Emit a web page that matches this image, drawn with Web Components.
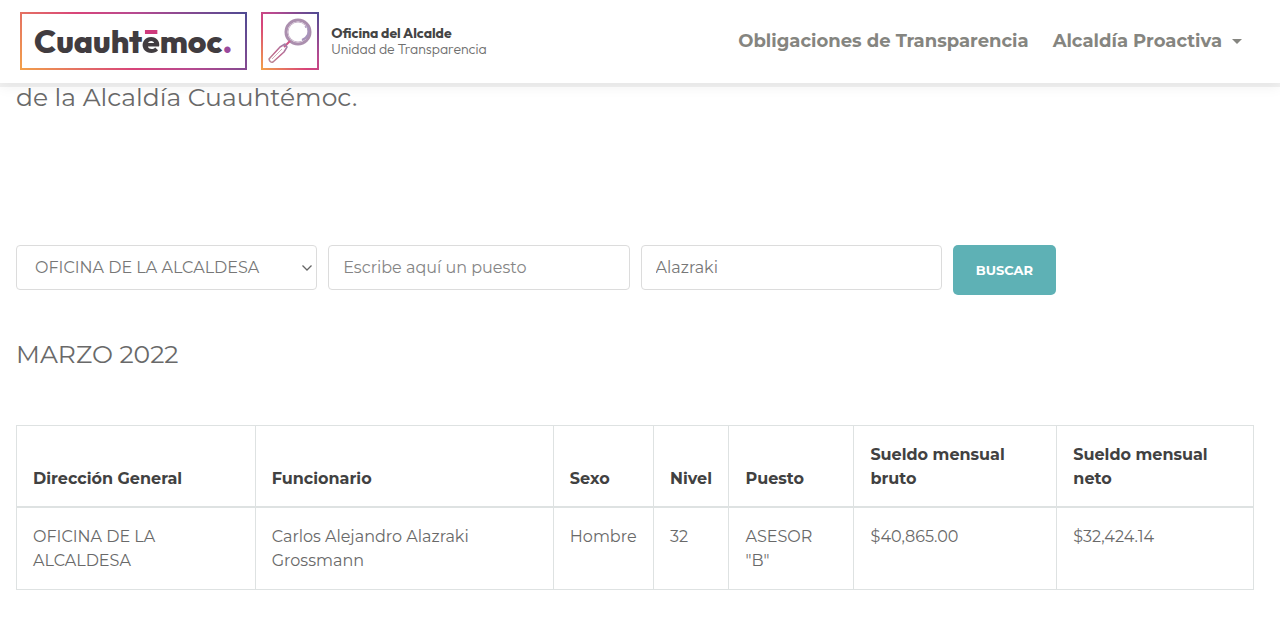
<!DOCTYPE html>
<html lang="es">
<head>
<meta charset="utf-8">
<meta name="viewport" content="width=device-width, initial-scale=1">
<title>Unidad de Transparencia</title>
<style>
  :root {
    --display: Montserrat, Inter, "Open Sans", sans-serif;
    --logo: Outfit, Urbanist, Inter, sans-serif;
    --ink: #414141;
    --ink-2: #696969;
    --ink-3: #858580;
    --rule: #dee2e2;
    --teal: #5eb1b5;
  }
  body {
    margin: 0;
    background: #fff;
    color: var(--ink-2);
    font-family: var(--display);
    font-size: 16px;
    line-height: 24px;
  }
  main { padding: 0 26px 24px 16px; }
</style>
</head>
<body>

<site-header>
  <brand-logo slot="brand"></brand-logo>
  <nav-link href="#obligaciones">Obligaciones de Transparencia</nav-link>
  <nav-link href="#proactiva" dropdown>Alcaldía Proactiva</nav-link>
</site-header>

<main>
  <page-title>de la Alcaldía Cuauhtémoc.</page-title>
  <salary-search puesto="" nombre="Alazraki"></salary-search>
  <page-title>MARZO 2022</page-title>
  <salary-table></salary-table>
</main>

<script>
// Attach an open shadow root with the given styles and markup.
function mount(el, styles, markup) {
  const root = el.attachShadow({ mode: 'open' });
  root.innerHTML = `<style>*, *::before { box-sizing: border-box; }${styles}</style>${markup}`;
  return root;
}

// ── <site-header> ─────────────────────────────────────────────────────
class SiteHeader extends HTMLElement {
  constructor() {
    super();
    mount(this, `
      :host { display: block; position: sticky; top: 0; z-index: 10; }
      header {
        display: flex; align-items: center; justify-content: space-between;
        gap: 24px;
        padding: 12px 38px 13px 20px;
        background: #fff;
        box-shadow: 0 4px 0 rgba(0, 0, 0, .05), 0 5px 12px rgba(0, 0, 0, .05);
      }
      nav { display: flex; align-items: center; gap: 24px; }
    `, `
      <header>
        <slot name="brand"></slot>
        <nav aria-label="Principal"><slot></slot></nav>
      </header>
    `);
  }
}

// ── <brand-logo> ──────────────────────────────────────────────────────
class BrandLogo extends HTMLElement {
  constructor() {
    super();
    mount(this, `
      :host { display: flex; align-items: center; gap: 14px; flex: none; font-family: var(--logo); }
      .word, .lens {
        height: 58px;
        border: 2px solid;
        border-image: linear-gradient(45deg, #f2a04a, #d8447a 40%, #b84a90 60%, #4f4a92) 1;
      }
      .word {
        display: flex; align-items: center;
        padding: 0 13px 0 12px;
        color: #413c40;
        font-size: 32px; font-weight: 800; line-height: 40px;
      }
      .e {
        background: linear-gradient(#cf3a7c 13px, #413c40 13px);
        -webkit-background-clip: text;
        background-clip: text;
        color: transparent;
      }
      .dot { color: #9a4a9c; }
      .lens { width: 58px; }
      .lens svg { display: block; width: 54px; height: 54px; }
      .office { color: #6f6f6f; font-size: 14px; font-weight: 300; line-height: 16px; margin-left: -2px; }
      .office b { display: block; color: #444; font-weight: 700; }
    `, `
      <div class="word"><span>Cuauht<span class="e">ē</span>moc<span class="dot">.</span></span></div>
      <div class="lens">
        <svg viewBox="0 0 54 54" fill="none" aria-hidden="true">
          <defs>
            <linearGradient id="g" x1="0" y1="1" x2="1" y2="0">
              <stop offset="0" stop-color="#b98a93"/>
              <stop offset=".5" stop-color="#c0638c"/>
              <stop offset="1" stop-color="#9a86ad"/>
            </linearGradient>
          </defs>
          <circle cx="35" cy="18" r="12" stroke="#ab8fae" stroke-width="3"/>
          <circle cx="35" cy="18" r="10" stroke="#c8b3ca" stroke-width="1"/>
          <path d="M45 13q3 9-6 13" stroke="#a793bb" stroke-width="2"/>
          <path d="M42 12l1 2m1-3v2" stroke="#a793bb"/>
          <path d="M27 27l-6 6" stroke="#cf5586" stroke-width="2"/>
          <path d="M22 30l2 3-3 5L10 48q-3 1-4-3L17 33z" stroke="url(#g)" stroke-width="1.5" stroke-linejoin="round"/>
          <path d="M19 35L9 45" stroke="#d3b0ba"/>
        </svg>
      </div>
      <div class="office"><b>Oficina del Alcalde</b>Unidad de Transparencia</div>
    `);
  }
}

// ── <nav-link href dropdown> ──────────────────────────────────────────
class NavLink extends HTMLElement {
  constructor() {
    super();
    this._root = mount(this, `
      :host { display: block; }
      a {
        display: flex; align-items: center; gap: 10px;
        color: var(--ink-3);
        font-size: 18px; font-weight: 700; line-height: 24px;
        text-decoration: none;
        white-space: nowrap;
      }
      :host([dropdown]) a::after {
        content: "";
        border: 5px solid transparent;
        border-top-color: currentColor;
        border-bottom: 0;
      }
    `, '<a><slot></slot></a>');
  }
  connectedCallback() {
    const a = this._root.querySelector('a');
    a.href = this.getAttribute('href') || '#';
    if (this.hasAttribute('dropdown')) a.setAttribute('aria-haspopup', 'true');
  }
}

// ── <page-title> ──────────────────────────────────────────────────────
class PageTitle extends HTMLElement {
  constructor() {
    super();
    mount(this, `
      :host { display: block; }
      h2 { margin: 0; font-size: 25px; font-weight: 400; line-height: 28px; }
    `, '<h2><slot></slot></h2>');
  }
}

// ── <salary-search puesto nombre> ─────────────────────────────────────
class SalarySearch extends HTMLElement {
  constructor() {
    super();
    this._root = mount(this, `
      :host { display: block; margin: 134px 0 45px; }
      form {
        display: grid;
        grid-template-columns: repeat(4, 1fr);
        align-items: start;
        gap: 11px;
      }
      .field { display: grid; align-items: center; }
      .field > * { grid-area: 1 / 1; }
      input, select {
        width: 100%; height: 45px;
        margin: 0; padding: 0 14px;
        border: 1px solid #dcdcdc;
        border-radius: 4px;
        background: #fff;
        color: #777;
        font: inherit;
      }
      select { appearance: none; padding: 0 28px 0 18px; }
      input::placeholder { color: #858585; opacity: 1; }
      svg { justify-self: end; width: 12px; height: 8px; margin-right: 4px; pointer-events: none; }
      button {
        justify-self: start;
        height: 50px; padding: 0 23px;
        border: 0; border-radius: 5px;
        background: var(--teal);
        color: #fff;
        font: inherit; font-size: 13px; font-weight: 700;
        cursor: pointer;
      }
    `, `
      <form>
        <div class="field">
          <select aria-label="Dirección general"><option>OFICINA DE LA ALCALDESA</option></select>
          <svg viewBox="0 0 12 8" fill="none" stroke="#666" stroke-width="1.3" aria-hidden="true"><path d="M1.500 1.500L6 6l4.500-4.500"/></svg>
        </div>
        <input name="puesto" type="text" aria-label="Puesto" placeholder="Escribe aquí un puesto">
        <input name="nombre" type="text" aria-label="Nombre">
        <button type="submit">BUSCAR</button>
      </form>
    `);
    this._root.querySelector('form').addEventListener('submit', (ev) => ev.preventDefault());
  }
  connectedCallback() {
    for (const name of ['puesto', 'nombre']) {
      this._root.querySelector(`[name=${name}]`).value = this.getAttribute(name) || '';
    }
  }
}

// ── <salary-table> ────────────────────────────────────────────────────
const COLUMNS = [
  { key: 'direccion',   label: 'Dirección General',    width: '19.3%' },
  { key: 'funcionario', label: 'Funcionario',          width: '24.1%' },
  { key: 'sexo',        label: 'Sexo',                 width: '8.1%' },
  { key: 'nivel',       label: 'Nivel',                width: '6.1%' },
  { key: 'puesto',      label: 'Puesto',               width: '10.1%' },
  { key: 'bruto',       label: 'Sueldo mensual bruto', width: '16.4%' },
  { key: 'neto',        label: 'Sueldo mensual neto',  width: '15.9%' },
];

const ROWS = [
  {
    direccion: 'OFICINA DE LA ALCALDESA',
    funcionario: 'Carlos Alejandro Alazraki Grossmann',
    sexo: 'Hombre',
    nivel: '32',
    puesto: 'ASESOR "B"',
    bruto: '$40,865.00',
    neto: '$32,424.14',
  },
];

class SalaryTable extends HTMLElement {
  constructor() {
    super();
    mount(this, `
      :host { display: block; margin-top: 57px; }
      table {
        width: 100%;
        border-collapse: collapse;
        table-layout: fixed;
      }
      th, td {
        padding: 17px 16px 16px;
        border: 1px solid var(--rule);
        text-align: left;
        vertical-align: top;
      }
      th {
        padding-bottom: 15px;
        border-bottom-width: 2px;
        color: var(--ink);
        font-weight: 700;
        vertical-align: bottom;
      }
    `, `
      <table>
        <colgroup>${COLUMNS.map(c => `<col style="width: ${c.width}">`).join('')}</colgroup>
        <thead><tr>${COLUMNS.map(c => `<th scope="col">${c.label}</th>`).join('')}</tr></thead>
        <tbody>${ROWS.map(r => `<tr>${COLUMNS.map(c => `<td>${r[c.key]}</td>`).join('')}</tr>`).join('')}</tbody>
      </table>
    `);
  }
}

customElements.define('site-header', SiteHeader);
customElements.define('brand-logo', BrandLogo);
customElements.define('nav-link', NavLink);
customElements.define('page-title', PageTitle);
customElements.define('salary-search', SalarySearch);
customElements.define('salary-table', SalaryTable);
</script>
</body>
</html>
